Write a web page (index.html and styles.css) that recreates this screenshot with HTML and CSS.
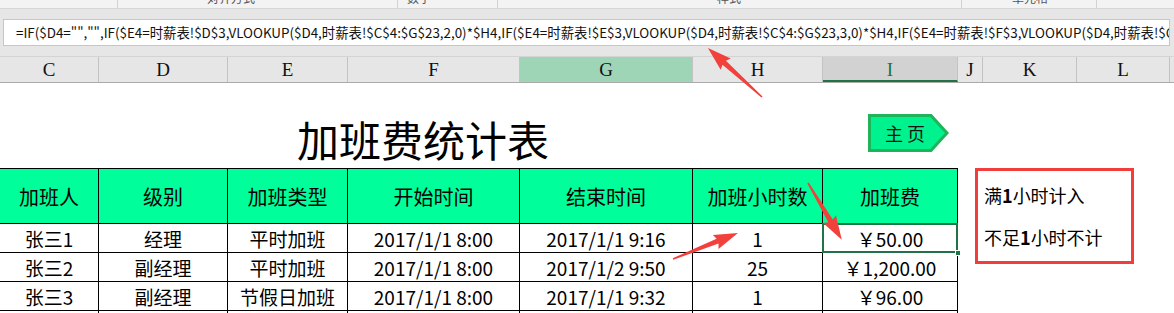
FILE: index.html
```html
<!DOCTYPE html>
<html lang="zh-CN">
<head>
    <meta charset="UTF-8">
    <title>加班费统计表</title>
    <link rel="stylesheet" href="styles.css">
</head>
<body>

<div class="ribbon">
  <span class="rb-group g1"></span>
  <span class="rb-group g2"><span class="rb-label">对齐方式</span></span>
  <span class="rb-group g3"><span class="rb-label">数字</span></span>
  <span class="rb-group g4"><span class="rb-label">样式</span></span>
  <span class="rb-group g5"><span class="rb-label">单元格</span></span>
  <span class="rb-group g6"></span>
</div>

<div class="formula-area">
  <div class="formula-box">=IF($D4="","",IF($E4=时薪表!$D$3,VLOOKUP($D4,时薪表!$C$4:$G$23,2,0)*$H4,IF($E4=时薪表!$E$3,VLOOKUP($D4,时薪表!$C$4:$G$23,3,0)*$H4,IF($E4=时薪表!$F$3,VLOOKUP($D4,时薪表!$C$4:$G$23,4,0)*$H4))))</div>
</div>

<div class="col-heads">
  <span class="ch w-c">C</span>
  <span class="ch w-d">D</span>
  <span class="ch w-e">E</span>
  <span class="ch w-f">F</span>
  <span class="ch w-g ch-hl">G</span>
  <span class="ch w-h">H</span>
  <span class="ch w-i ch-sel">I</span>
  <span class="ch w-j">J</span>
  <span class="ch w-k">K</span>
  <span class="ch w-l">L</span>
  <span class="ch w-rest"></span>
</div>

<div class="sheet">
  <div class="top-area">
    <h1 class="title">加班费统计表</h1>
    <div class="home-btn">
      <svg width="81" height="38" viewBox="0 0 81 38">
        <polygon points="1.5,1.5 63,1.5 79,19 63,36.5 1.5,36.5" fill="#00f28f" stroke="#1fb35a" stroke-width="3"/>
      </svg>
      <span class="home-text">主 页</span>
    </div>
  </div>

  <div class="sheet-body">
    <table class="ot-table">
      <colgroup>
        <col class="w-c"><col class="w-d"><col class="w-e"><col class="w-f">
        <col class="w-g"><col class="w-h"><col class="w-i">
      </colgroup>
      <tr class="head-row">
        <td>加班人</td><td>级别</td><td>加班类型</td><td>开始时间</td>
        <td>结束时间</td><td>加班小时数</td><td>加班费</td>
      </tr>
      <tr>
        <td>张三1</td><td>经理</td><td>平时加班</td><td>2017/1/1 8:00</td>
        <td>2017/1/1 9:16</td><td>1</td>
        <td class="sel">￥50.00<span class="sel-box"></span><span class="handle"></span></td>
      </tr>
      <tr>
        <td>张三2</td><td>副经理</td><td>平时加班</td><td>2017/1/1 8:00</td>
        <td>2017/1/2 9:50</td><td>25</td><td>￥1,200.00</td>
      </tr>
      <tr>
        <td>张三3</td><td>副经理</td><td>节假日加班</td><td>2017/1/1 8:00</td>
        <td>2017/1/1 9:32</td><td>1</td><td>￥96.00</td>
      </tr>
      <tr>
        <td></td><td></td><td></td><td></td><td></td><td></td><td></td>
      </tr>
    </table>

    <div class="note">
      <div>满<b>1</b>小时计入</div>
      <div>不足<b>1</b>小时不计</div>
    </div>
  </div>
</div>

<!-- red arrows drawn over the screenshot -->
<svg class="arrows" width="1174" height="313" viewBox="0 0 1174 313">
  <g fill="#f2403c">
    <polygon transform="translate(762,97) rotate(222.2)" points="0,-0.8 51,-2.6 49,-7.5 73,0 49,7.5 51,2.6 0,0.8"/>
    <polygon transform="translate(673,259) rotate(-21.8)" points="0,-0.8 48,-2.6 46,-7.5 70,0 46,7.5 48,2.6 0,0.8"/>
    <polygon transform="translate(808,183) rotate(59.2)" points="0,-0.8 44,-2.6 42,-7.5 66,0 42,7.5 44,2.6 0,0.8"/>
  </g>
</svg>

</body>
</html>
```

FILE: styles.css
```css
* {
    margin: 0;
    padding: 0;
    box-sizing: border-box;
}
body {
    position: relative;
    width: 1174px;
    height: 313px;
    overflow: hidden;
    background: white;
    font-family: "Noto Sans CJK SC", "Noto Sans", sans-serif;
    color: black;
}

/* ribbon strip, cut off at the top */
.ribbon {
    display: flex;
    height: 9px;
    overflow: hidden;
    background-color: #f3f3f3;
    border-bottom: 1px solid #d6d6d6;
}
.rb-group {
    height: 8px;
    border-right: 1px solid #d2d2d2;
}
.rb-label {
    display: block;
    margin-top: -10px;
    font-size: 12px;
    line-height: 16px;
    color: #555;
}
.g1 { width: 118px; }
.g2 { width: 280px; padding-left: 89px; }
.g3 { width: 100px; padding-left: 9px; }
.g4 { width: 464px; padding-left: 219px; }
.g5 { width: 135px; padding-left: 50px; }
.g6 { flex: 1; border-right: none; }

/* formula bar */
.formula-area {
    height: 47px;
    background-color: #e6e6e6;
    padding: 10px 4px 0 3px;
}
.formula-box {
    height: 27px;
    background: white;
    border: 1px solid #c6c6c6;
    padding-left: 12px;
    font-size: 13.4px;
    line-height: 25px;
    white-space: nowrap;
    overflow: hidden;
    color: #111;
}

/* column headers */
.col-heads {
    display: flex;
    height: 27px;
    background-color: #e6e6e6;
    border-top: 1px solid #d4d4d4;
    border-bottom: 1px solid #ababab;
}
.ch {
    height: 25px;
    border-right: 1px solid #c3c3c3;
    font-family: "Liberation Serif", "DejaVu Serif", serif;
    font-size: 19px;
    line-height: 26px;
    text-align: center;
    color: #111;
}
.ch-hl {
    background-color: #9fd5b7;
}
.ch-sel {
    background-color: #d2d2d2;
    color: #217346;
    border-bottom: 2px solid #217346;
}
.w-c { width: 99px; }
.w-d { width: 129px; }
.w-e { width: 120px; }
.w-f { width: 172px; }
.w-g { width: 173px; }
.w-h { width: 130px; }
.w-i { width: 135px; }
.w-j { width: 25px; }
.w-k { width: 94px; }
.w-l { width: 93px; }
.w-rest { flex: 1; border-right: none; }

/* sheet */
.top-area {
    display: grid;
    grid-template-columns: 868px 81px;
    height: 85px;
}
.title {
    padding-left: 297px;
    margin-top: 35px;
    font-size: 42px;
    line-height: 42px;
    font-weight: normal;
    white-space: nowrap;
}
.home-btn {
    position: relative;
    margin-top: 31px;
    height: 38px;
}
.home-btn svg {
    display: block;
}
.home-text {
    position: absolute;
    left: 12px;
    top: 0;
    width: 50px;
    text-align: center;
    font-size: 18px;
    line-height: 38px;
    color: #111;
}

.sheet-body {
    display: flex;
    align-items: flex-start;
}
.ot-table {
    border-collapse: collapse;
    table-layout: fixed;
    width: 958px;
    margin-left: -1px;
}
.ot-table td {
    border: 1px solid black;
    height: 29px;
    padding: 0;
    text-align: center;
    font-size: 19px;
    line-height: 27px;
    white-space: nowrap;
}
.head-row td {
    height: 55px;
    background-color: #00fe9b;
    font-size: 20px;
}
.sel {
    position: relative;
}
.sel-box {
    position: absolute;
    left: -1px;
    top: -1px;
    right: -1px;
    bottom: -1px;
    border: 2px solid #217346;
}
.handle {
    position: absolute;
    right: -4px;
    bottom: -4px;
    width: 6px;
    height: 6px;
    background-color: #217346;
    border: 1px solid white;
}

.note {
    margin-left: 17px;
    width: 159px;
    height: 96px;
    border: 3px solid #f23d3d;
    padding: 3px 0 0 6px;
    font-size: 18px;
    line-height: 42px;
    white-space: nowrap;
}

.arrows {
    position: absolute;
    left: 0;
    top: 0;
    pointer-events: none;
}
```
